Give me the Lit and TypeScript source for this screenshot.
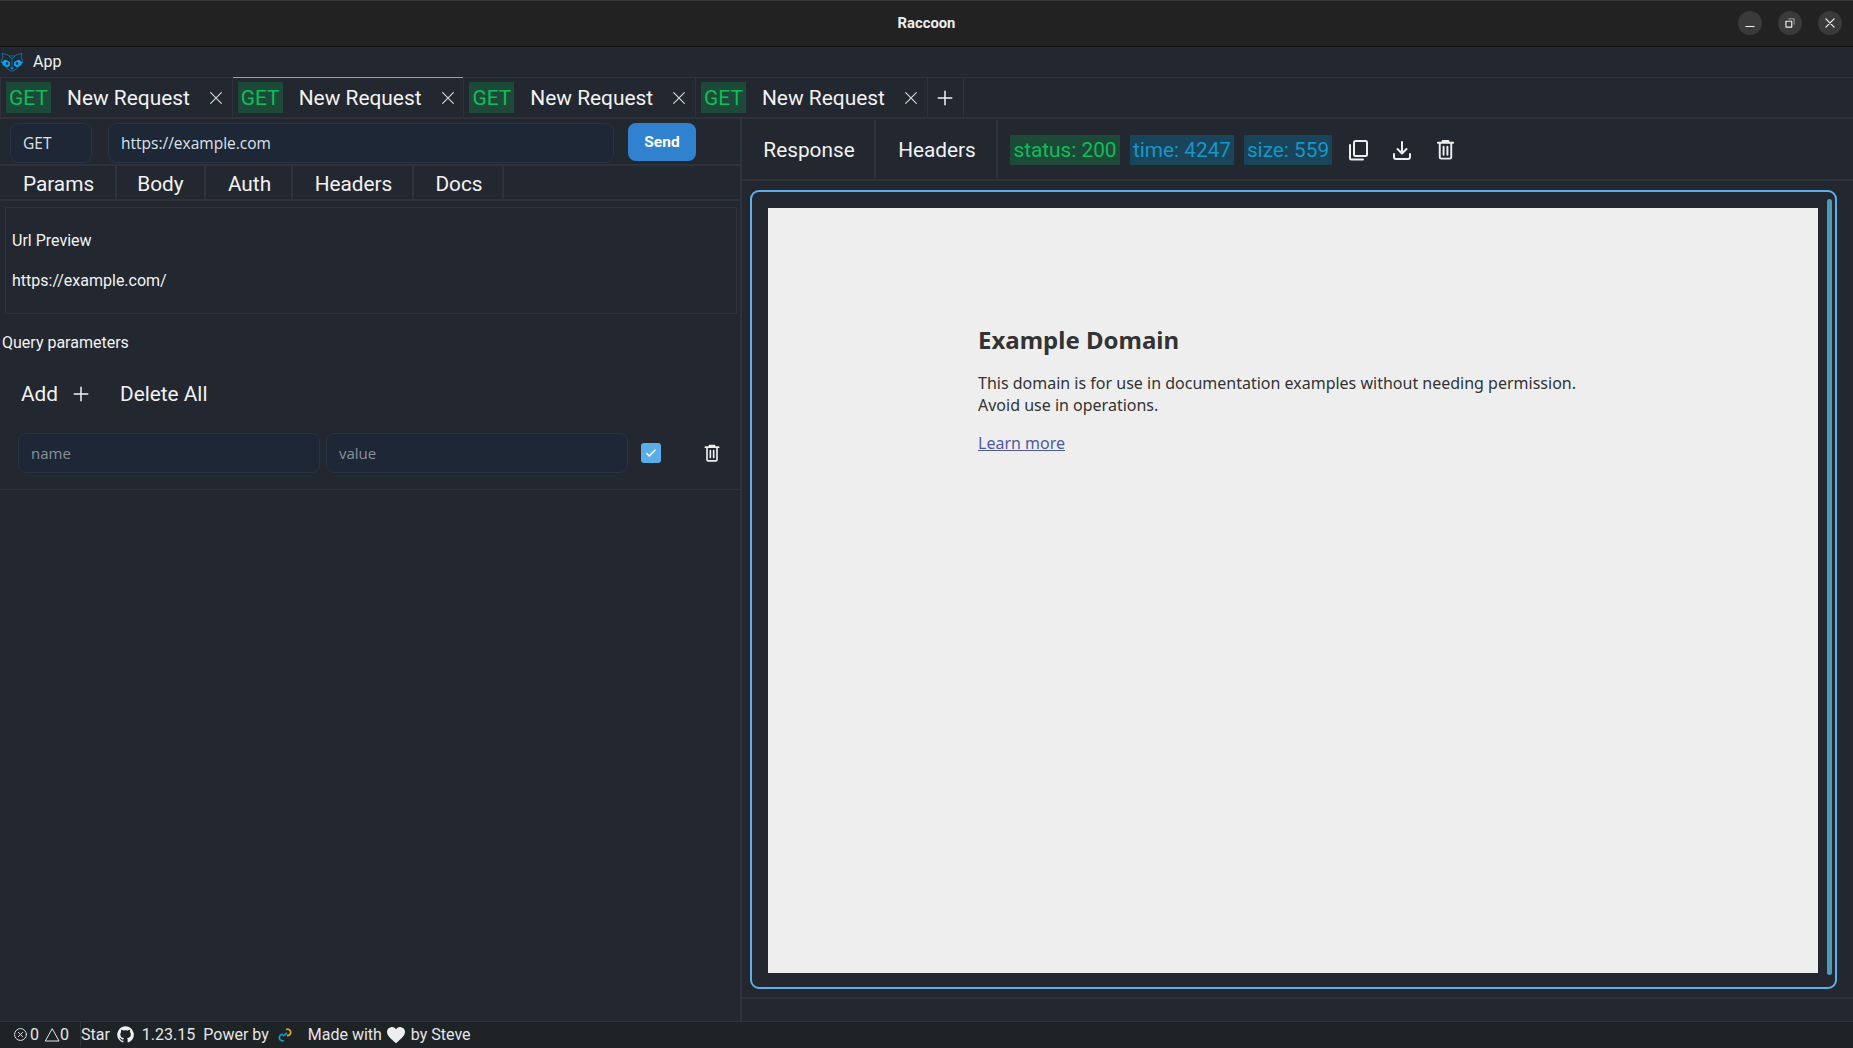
import { LitElement, html, css, svg } from "lit";
import { customElement } from "lit/decorators.js";

const ic = (size: number, body: unknown, sw = 2) => html`<svg width=${size} height=${size} viewBox="0 0 24 24" fill="none" stroke="currentColor" stroke-width=${sw} stroke-linecap="round" stroke-linejoin="round">${body}</svg>`;
const trash = (s: number) => ic(s, svg`<path d="M4 5h16M9 5V3h6v2M6 5v15a1.5 1.5 0 0 0 1.5 1.5h9A1.5 1.5 0 0 0 18 20V5M10 9v8.500M14 9v8.500"/>`, 2);
const closeX = ic(16, svg`<path d="M4 4l16 16M20 4L4 20"/>`, 1.6);
const plus = (s: number) => ic(s, svg`<path d="M12 3v18M3 12h18"/>`, 2);

@customElement("app-root")
export class AppRoot extends LitElement {
  static styles = css`
    :host { display: flex; flex-direction: column; width: 1853px; height: 1048px; overflow: hidden; background: #232730; color: #f2f2f2; font-family: Roboto, sans-serif; }
    * { box-sizing: border-box; }
    svg { display: block; flex: none; }
    .title { height: 47px; flex: none; background: #222; border-top: 1px solid #383838; border-bottom: 1px solid #111; display: flex; align-items: center; justify-content: center; position: relative; font: 700 14.800px Roboto, sans-serif; color: #eee; padding-bottom: 2px; }
    .winbtns { position: absolute; right: 11px; top: 10px; display: flex; gap: 16px; }
    .winbtn { width: 24px; height: 24px; border-radius: 50%; background: #3a3a3a; display: flex; align-items: center; justify-content: center; color: #eee; }
    .menu { height: 30px; flex: none; display: flex; align-items: center; font-size: 16px; gap: 9px; padding-bottom: 1px; color: #f0f0f0; }
    .tabs { height: 42px; flex: none; display: flex; border-bottom: 2px solid #2d323b; border-top: 1px solid #2d323b; }
    .tab { width: 232.670px; display: flex; align-items: center; padding: 0 0 0 5px; border-right: 1px solid #2d323b; border-left: 1px solid #2d323b; margin-right: -1px; font-size: 20.900px; position: relative; }
    .tab.active::before { content: ""; position: absolute; left: 0; right: 0; top: -1px; height: 1px; background: #62aee8; }
    .get { background: #1d4a38; color: #0dbd5a; height: 31px; width: 45px; display: flex; align-items: center; justify-content: center; margin-right: 16px; }
    .tab-name { width: 122px; white-space: nowrap; }
    .tab-x { margin-left: 19px; color: #ddd; }
    .tab-plus { width: 37px; display: flex; align-items: center; justify-content: center; border-right: 1px solid #2d323b; border-left: 1px solid #2d323b; }
    .main { flex: 1; display: flex; min-height: 0; }
    .left { width: 742px; flex: none; display: flex; flex-direction: column; border-right: 2px solid #2d323b; }
    .right { flex: 1; display: flex; flex-direction: column; min-width: 0; padding-bottom: 22px; }
    .urlrow { height: 47px; flex: none; display: flex; align-items: flex-start; padding: 4px 0 0 10px; border-bottom: 2px solid #2d323b; }
    .inp { background: #1e2736; border: 1px solid #2a3342; border-radius: 8px; height: 40px; display: flex; align-items: center; padding-left: 12px; font: 15.500px "Open Sans", sans-serif; color: #dfe3e8; }
    .sel { width: 82px; margin-right: 16px; }
    .url { width: 506px; margin-right: 14px; }
    .send { width: 68px; height: 38px; border-radius: 8px; background: #3182ce; color: #fff; font-weight: 700; font-size: 15.500px; display: flex; align-items: center; justify-content: center; }
    .subtabs { height: 35px; flex: none; display: flex; border-bottom: 2px solid #2d323b; padding-left: 2px; align-self: stretch; }
    .subtab { display: flex; align-items: center; justify-content: center; font-size: 20.800px; border-right: 2px solid #2d323b; padding-top: 2px; }
    .subtab.shift { padding-left: 2px; }
    .preview { margin: 6px 5px 0; width: 732px; height: 107px; border: 1px solid #2d323b; padding: 24px 6px 0; font-size: 16px; display: flex; flex-direction: column; gap: 23px; line-height: 17px; }
    .qp { font-size: 16px; margin: 20px 0 0 2px; line-height: 17px; }
    .actions { display: flex; align-items: center; font-size: 20.800px; padding-left: 21px; margin-top: 28px; height: 30px; }
    .add { margin-right: 14px; }
    .del { margin-left: 30px; }
    .param { display: flex; align-items: center; height: 40px; padding-left: 18px; margin-top: 24px; position: relative; }
    .param .inp { width: 302px; margin-right: 6px; color: #8a9098; padding-left: 12px; font-size: 15px; }
    .check { width: 20px; height: 20px; border-radius: 3px; background: #5aaee8; margin-left: 7px; display: flex; align-items: center; justify-content: center; color: #fff; }
    .ptrash { margin-left: 41px; color: #eee; }
    .rule { height: 1px; background: #2d323b; margin-top: 16px; }
    .resp-head { height: 61px; flex: none; display: flex; align-items: center; border-bottom: 2px solid #2d323b; margin-top: 1px; }
    .rtab { height: 100%; display: flex; align-items: center; justify-content: center; font-size: 20.800px; border-right: 2px solid #2d323b; padding-left: 2px; }
    .badge { height: 30px; display: flex; align-items: center; justify-content: center; font-size: 20.800px; white-space: nowrap; }
    .green { background: #1d4a38; color: #0dbd5a; }
    .blue { background: #1a4459; color: #1597c9; }
    .ticons { display: flex; align-items: center; color: #eee; }
    .frame-wrap { flex: 1; padding: 9px 16px 8px 8px; border-bottom: 2px solid #2d323b; min-height: 0; display: flex; }
    .frame { flex: 1; border: 2px solid #5eaee8; border-radius: 9px; padding: 16px 17px 14px 16px; display: flex; position: relative; }
    .page { flex: 1; background: #eee; color: #333; font-family: "Noto Sans", sans-serif; padding: 116px 0 0 210px; margin-right: 0; }
    .scroll { position: absolute; right: 3px; top: 7px; bottom: 12px; width: 5px; border-radius: 3px; background: #4b9cba; }
    h1 { margin: 0; font-size: 24px; font-weight: 700; line-height: 32px; color: #333; }
    .page p { margin: 0; font-size: 16px; line-height: 22px; width: 640px; }
    .page .p1 { margin-top: 16px; }
    .page .p2 { margin-top: 16px; }
    .page a { color: #505a9e; text-decoration: underline; }
    .status { height: 27px; flex: none; background: #1e2326; border-top: 1px solid #2d323b; display: flex; align-items: center; font-size: 16px; color: #e6e6e6; white-space: nowrap; padding-bottom: 1px; }
    .stat { width: 81px; height: 100%; border-right: 1px solid #2d323b; display: flex; align-items: center; padding-left: 13px; gap: 2px; }
    .warn-count { margin-left: -2px; }
    .spacer { width: 1px; }
  `;

  private tab(active = false) {
    return html`<div class="tab ${active ? "active" : ""}"><span class="get">GET</span><span class="tab-name">New Request</span><span class="tab-x">${closeX}</span></div>`;
  }

  render() {
    return html`
      <div class="title">Raccoon
        <div class="winbtns">
          <div class="winbtn">${ic(14, svg`<path d="M5 18h14"/>`, 2)}</div>
          <div class="winbtn">${ic(14, svg`<rect x="5" y="9" width="10" height="10"/><path d="M10 5h9v9" stroke-width="1"/>`, 2)}</div>
          <div class="winbtn">${ic(14, svg`<path d="M5 5l14 14M19 5L5 19"/>`, 2.200)}</div>
        </div>
      </div>
      <div class="menu">
        <svg width="24" height="20" viewBox="0 0 24 20" fill="none" stroke="#0d7fbd" stroke-width="0.800" stroke-linejoin="round">
          <path d="M3 5L2 1.500 6.500 2.500 9 4h6l2.500-1.500L22 1.500 21 5l2 4-2 4-5 4-3 2h-2l-3-2-5-4-2-4z"/>
          <path d="M9 4l3 3 3-3M12 7v8"/>
          <path d="M1.500 10.500L5 7.500 10 10 10 13.500 7 15.500 3.500 13z" fill="#0ba5ee" stroke="none"/>
          <path d="M22.500 10.500L19 7.500 14 10 14 13.500 17 15.500 20.500 13z" fill="#0ba5ee" stroke="none"/>
          <circle cx="7" cy="11.500" r="1.300" fill="#0e1c2a" stroke="none"/><circle cx="17" cy="11.500" r="1.300" fill="#0e1c2a" stroke="none"/>
          <path d="M10 15.500h4l-2 2z" fill="#0ba5ee" stroke="none"/>
        </svg>
        <span>App</span>
      </div>
      <div class="tabs">
        ${this.tab()}${this.tab(true)}${this.tab()}${this.tab()}
        <div class="tab-plus">${plus(18)}</div>
      </div>
      <div class="main">
        <div class="left">
          <div class="urlrow">
            <div class="inp sel">GET</div>
            <div class="inp url">https://example.com</div>
            <div class="send">Send</div>
          </div>
          <div class="subtabs">
            ${[["Params",115,false],["Body",89,false],["Auth",87,true],["Headers",121,true],["Docs",90,true]].map(([t,w,s]) => html`<div class="subtab ${s ? "shift" : ""}" style="width:${w}px">${t}</div>`)}
          </div>
          <div class="preview"><div>Url Preview</div><div>https://example.com/</div></div>
          <div class="qp">Query parameters</div>
          <div class="actions"><span class="add">Add</span>${plus(18)}<span class="del">Delete All</span></div>
          <div class="param">
            <div class="inp">name</div>
            <div class="inp">value</div>
            <div class="check">${ic(14, svg`<path d="M5 13l4 4 10-10"/>`, 2.500)}</div>
            <div class="ptrash">${trash(20)}</div>
          </div>
          <div class="rule"></div>
        </div>
        <div class="right">
          <div class="resp-head">
            <div class="rtab" style="width:134px">Response</div>
            <div class="rtab" style="width:122px">Headers</div>
            <div class="badge green" style="margin-left:12px;width:110px">status: 200</div>
            <div class="badge blue" style="margin-left:10px;width:104px">time: 4247</div>
            <div class="badge blue" style="margin-left:10px;width:88px">size: 559</div>
            <div class="ticons">
              <span style="margin-left:14px">${ic(24, svg`<rect x="8" y="3" width="13" height="15" rx="1.500"/><path d="M4 7v13a1.500 1.500 0 0 0 1.500 1.500H17"/>`, 2)}</span>
              <span style="margin-left:20px">${ic(24, svg`<path d="M4 16v3a2 2 0 0 0 2 2h12a2 2 0 0 0 2-2v-3M12 4v11M7.500 11l4.500 4.500 4.500-4.500"/>`, 2)}</span>
              <span style="margin-left:20px">${trash(23)}</span>
            </div>
          </div>
          <div class="frame-wrap">
            <div class="frame">
              <div class="page">
                <h1>Example Domain</h1>
                <p class="p1">This domain is for use in documentation examples without needing permission. Avoid use in operations.</p>
                <p class="p2"><a>Learn more</a></p>
              </div>
              <div class="scroll"></div>
            </div>
          </div>
        </div>
      </div>
      <div class="status">
        <div class="stat">
          ${ic(15, svg`<circle cx="12" cy="12" r="9.500"/><path d="M8.500 8.500l7 7M15.500 8.500l-7 7"/>`, 1.500)}<span>0</span>
          <span class="spacer"></span>
          ${ic(16, svg`<path d="M12 3L2 21h20z"/>`, 1.500)}<span class="warn-count">0</span>
        </div>
        <span>Star</span>
        <svg width="17" height="17" viewBox="0 0 24 24" fill="#f0f0f0" style="margin-left:7px"><path d="M12 .5a11.700 11.700 0 0 0-3.700 22.800c.6.100.8-.3.800-.6v-2c-3.300.7-4-1.600-4-1.600-.5-1.400-1.300-1.800-1.300-1.800-1.100-.7.100-.7.100-.7 1.200.1 1.800 1.200 1.800 1.200 1.100 1.800 2.800 1.300 3.500 1 .1-.8.400-1.300.8-1.600-2.600-.3-5.300-1.300-5.300-5.800 0-1.300.5-2.300 1.200-3.100-.1-.3-.5-1.500.1-3.100 0 0 1-.3 3.200 1.200a11 11 0 0 1 5.800 0c2.200-1.500 3.200-1.200 3.200-1.200.6 1.600.2 2.800.1 3.100.8.800 1.200 1.900 1.200 3.100 0 4.500-2.700 5.500-5.300 5.800.4.400.8 1.100.8 2.200v3.300c0 .3.200.7.800.6A11.700 11.700 0 0 0 12 .5z"/></svg>
        <span style="margin-left:8px">1.23.15</span>
        <span style="margin-left:8px">Power by</span>
        <svg width="14" height="16" viewBox="0 0 14 16" fill="none" stroke-width="1.800" style="margin-left:9px"><path d="M6 13.500a3.200 3.200 0 1 1-1-6" stroke="#1597c9"/><path d="M8 2.500a3.200 3.200 0 1 1 1 6" stroke="#e0a020"/><path d="M5 9l4-3" stroke="#1597c9"/></svg>
        <span style="margin-left:16px">Made with</span>
        <svg width="20" height="18" viewBox="0 0 24 22" fill="#eee" style="margin-left:4px"><path d="M12 21C5 15 1 11.500 1 7a6 6 0 0 1 11-3 6 6 0 0 1 11 3c0 4.500-4 8-11 14z"/></svg>
        <span style="margin-left:5px">by Steve</span>
      </div>
    `;
  }
}
